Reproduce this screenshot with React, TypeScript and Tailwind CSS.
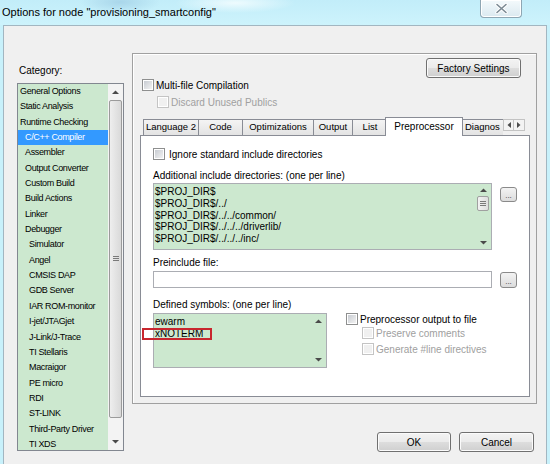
import type { ReactNode } from 'react';

const categories: [string, number][] = [
  ['General Options', 0],
  ['Static Analysis', 0],
  ['Runtime Checking', 0],
  ['C/C++ Compiler', 1],
  ['Assembler', 1],
  ['Output Converter', 1],
  ['Custom Build', 1],
  ['Build Actions', 1],
  ['Linker', 1],
  ['Debugger', 1],
  ['Simulator', 2],
  ['Angel', 2],
  ['CMSIS DAP', 2],
  ['GDB Server', 2],
  ['IAR ROM-monitor', 2],
  ['I-jet/JTAGjet', 2],
  ['J-Link/J-Trace', 2],
  ['TI Stellaris', 2],
  ['Macraigor', 2],
  ['PE micro', 2],
  ['RDI', 2],
  ['ST-LINK', 2],
  ['Third-Party Driver', 2],
  ['TI XDS', 2],
];

const indent = ['pl-[2px]', 'pl-[7px]', 'pl-[11px]'];

const tabs = [
  { label: 'Language 2', w: 'w-[55px]' },
  { label: 'Code', w: 'w-[44px]' },
  { label: 'Optimizations', w: 'w-[71px]' },
  { label: 'Output', w: 'w-[39px]' },
  { label: 'List', w: 'w-[35px]' },
];

function Arrow({ dir }: { dir: 'up' | 'down' | 'left' | 'right' }) {
  const d = {
    up: 'M0 4L3.5 0.5L7 4z',
    down: 'M0 0L3.5 3.5L7 0z',
    left: 'M4 0L0.5 3L4 6z',
    right: 'M0 0L3.5 3L0 6z',
  }[dir];
  const vertical = dir === 'up' || dir === 'down';
  return (
    <svg width={vertical ? 7 : 4} height={vertical ? 4 : 6} viewBox={vertical ? '0 0 7 4' : '0 0 4 6'}>
      <path d={d} fill="#4a4a4a" />
    </svg>
  );
}

function Grip() {
  return (
    <svg width="6" height="6" viewBox="0 0 6 6">
      <path d="M0 0.5H6M0 2.5H6M0 4.5H6" stroke="#7a7a7a" strokeWidth="1" />
    </svg>
  );
}

function Check({ disabled }: { disabled?: boolean }) {
  return (
    <span
      className={
        disabled
          ? 'block w-[12px] h-[12px] shrink-0 border border-[#c4c4c4] bg-white p-[1px]'
          : 'block w-[12px] h-[12px] shrink-0 border border-[#8e8f8f] bg-white p-[1px]'
      }
    >
      <span
        className={
          disabled
            ? 'block w-full h-full bg-[#f0f0f0]'
            : 'block w-full h-full bg-[linear-gradient(135deg,#c8ccd2,#f2f2f2)]'
        }
      />
    </span>
  );
}

function WinButton({ children, className }: { children: ReactNode; className: string }) {
  return (
    <div
      className={
        'flex items-center justify-center rounded-[3px] border border-[#707070] bg-[linear-gradient(to_bottom,#f3f3f3_0%,#ebebeb_48%,#dddddd_52%,#cfcfcf_100%)] shadow-[inset_0_0_0_1px_#fbfbfb] text-[10px] text-black ' +
        className
      }
    >
      {children}
    </div>
  );
}

function DotsButton({ className }: { className: string }) {
  return (
    <div
      className={
        'flex items-end justify-center pb-[2px] rounded-[3px] border border-[#8a8a8a] bg-[linear-gradient(to_bottom,#f3f3f3,#dcdcdc)] text-[8px] leading-[6px] text-[#333] ' +
        className
      }
    >
      ...
    </div>
  );
}

function CategoryList() {
  return (
    <div className="flex w-[107px] h-[368px] border border-[#828790] bg-[#cce8cf]">
      <div className="flex-1 flex flex-col">
        {categories.map(([name, level], i) => (
          <div
            key={name}
            className={
              (i === 3 ? 'bg-[#3399ff] text-white ' : 'text-black ') +
              indent[level] +
              ' h-[15.35px] leading-[15.35px] text-[9px] tracking-[-0.35px] whitespace-nowrap'
            }
          >
            {name}
          </div>
        ))}
      </div>
      <div className="w-[15px] flex flex-col items-center bg-[#f3f3f3]">
        <div className="h-[16px] flex items-center justify-center">
          <Arrow dir="up" />
        </div>
        <div className="w-[13px] h-[318px] rounded-[2px] border border-[#9b9b9b] bg-[linear-gradient(to_right,#eeeeee,#d9d9d9)] flex items-center justify-center">
          <Grip />
        </div>
        <div className="flex-1" />
        <div className="h-[17px] flex items-center justify-center">
          <Arrow dir="down" />
        </div>
      </div>
    </div>
  );
}

function Tabs() {
  return (
    <div className="relative z-10 flex h-[19px] pl-[3px]">
      <div className="flex items-end w-[360px] overflow-hidden">
        {tabs.map((t) => (
          <div
            key={t.label}
            className={
              t.w +
              ' h-[17px] shrink-0 border border-r-0 border-[#898c95] bg-[linear-gradient(to_bottom,#f4f4f4,#e3e3e3)] flex items-center justify-center text-[9.5px] text-black whitespace-nowrap'
            }
          >
            {t.label}
          </div>
        ))}
        <div className="relative z-10 w-[78px] h-[19px] -mx-[2px] shrink-0 border border-b-0 border-[#898c95] bg-white flex items-center justify-center pb-[1px] text-[10px] text-black">
          Preprocessor
        </div>
        <div className="w-[60px] h-[17px] shrink-0 border border-r-0 border-[#898c95] bg-[linear-gradient(to_bottom,#f4f4f4,#e3e3e3)] flex items-center pl-[3px] text-[9.5px] text-black whitespace-nowrap">
          Diagnos
        </div>
      </div>
      <div className="flex mt-[2px] self-start">
        <div className="w-[11px] h-[12px] border border-[#c3c3c3] bg-[#f3f3f3] flex items-center justify-center">
          <Arrow dir="left" />
        </div>
        <div className="w-[11px] h-[12px] border border-l-0 border-[#c3c3c3] bg-[#f3f3f3] flex items-center justify-center">
          <Arrow dir="right" />
        </div>
      </div>
    </div>
  );
}

function PreprocessorPage() {
  const dirs = [
    '$PROJ_DIR$',
    '$PROJ_DIR$/../',
    '$PROJ_DIR$/../../common/',
    '$PROJ_DIR$/../../../driverlib/',
    '$PROJ_DIR$/../../../inc/',
  ];
  return (
    <div className="relative -mt-[1px] h-[262px] border border-[#898c95] bg-white pl-[12px] text-[10px] text-black">
      <div className="mt-[12px] h-[12px] flex items-center gap-[4px]">
        <Check />
        <span>Ignore standard include directories</span>
      </div>
      <div className="mt-[10px] h-[12px] leading-[12px]">Additional include directories: (one per line)</div>
      <div className="mt-[1px] flex items-start">
        <div className="flex w-[339px] h-[67px] border border-[#abadb3] bg-[#cce8cf]">
          <div className="flex-1 pl-[1px] pt-[2px]">
            {dirs.map((d) => (
              <div key={d} className="leading-[11.8px] whitespace-nowrap">
                {d}
              </div>
            ))}
          </div>
          <div className="w-[14px] mr-[1px] flex flex-col items-center">
            <div className="h-[12px] flex items-center justify-center">
              <Arrow dir="up" />
            </div>
            <div className="w-[12px] h-[15px] rounded-[2px] border border-[#a0a0a0] bg-[linear-gradient(to_right,#f2f2f2,#dedede)] flex items-center justify-center">
              <Grip />
            </div>
            <div className="flex-1" />
            <div className="h-[12px] flex items-center justify-center">
              <Arrow dir="down" />
            </div>
          </div>
        </div>
        <DotsButton className="ml-[8px] mt-[4px] w-[17px] h-[15px]" />
      </div>
      <div className="mt-[7px] h-[12px] leading-[12px]">Preinclude file:</div>
      <div className="mt-[2px] flex items-start">
        <div className="w-[339px] h-[17px] border border-[#abadb3] bg-white" />
        <DotsButton className="ml-[8px] mt-[1px] w-[17px] h-[16px]" />
      </div>
      <div className="mt-[11px] h-[12px] leading-[12px]">Defined symbols: (one per line)</div>
      <div className="mt-[2px] flex items-start">
        <div className="flex w-[174px] h-[55px] border border-[#abadb3] bg-[#cce8cf]">
          <div className="flex-1 pl-[1px] pt-[2px]">
            <div className="leading-[11.8px]">ewarm</div>
            <div className="leading-[11.8px]">xNOTERM</div>
          </div>
          <div className="w-[14px] mr-[1px] flex flex-col items-center justify-between py-[5px]">
            <Arrow dir="up" />
            <Arrow dir="down" />
          </div>
        </div>
        <div className="ml-[19px] flex flex-col">
          <div className="h-[12px] flex items-center gap-[2px]">
            <Check />
            <span>Preprocessor output to file</span>
          </div>
          <div className="mt-[2px] h-[12px] pl-[16px] flex items-center gap-[2px] text-[#a0a0a0]">
            <Check disabled />
            <span>Preserve comments</span>
          </div>
          <div className="mt-[4px] h-[12px] pl-[16px] flex items-center gap-[2px] text-[#a0a0a0]">
            <Check disabled />
            <span>Generate #line directives</span>
          </div>
        </div>
      </div>
      {/* highlight drawn over the symbol list */}
      <div className="absolute left-[1px] top-[192px] w-[70px] h-[12px] border-2 border-[#c8262e]" />
    </div>
  );
}

export default function App() {
  return (
    <div className="w-[550px] h-[464px] overflow-hidden flex flex-col bg-[#c8f1fb] font-['Liberation_Sans',Arial,sans-serif]">
      <div className="h-[25px] shrink-0 flex items-start bg-[radial-gradient(ellipse_40px_12px_at_120px_2px,#a9d6ea,transparent),radial-gradient(ellipse_60px_10px_at_235px_3px,#eefbfe,transparent),linear-gradient(to_bottom,#c2edf9,#cdf3fc)]">
        <div className="pl-[2px] pt-[5px] text-[11px] leading-[14px] text-black whitespace-nowrap">
          Options for node "provisioning_smartconfig"
        </div>
        <div className="flex-1" />
        <div className="mr-[28px] w-[42px] h-[18px] rounded-b-[4px] border border-t-0 border-[#8ea6b3] bg-[linear-gradient(to_bottom,#f4fafc,#dbe9f0)] shadow-[inset_0_0_0_1px_#ffffff] flex items-center justify-center">
          <svg width="13" height="11" viewBox="0 0 13 11">
            <path d="M2 1.5L11 9.5M11 1.5L2 9.5" stroke="#ffffff" strokeWidth="3.4" strokeLinecap="round" />
            <path d="M2 1.5L11 9.5M11 1.5L2 9.5" stroke="#7b8a94" strokeWidth="1.6" strokeLinecap="round" />
          </svg>
        </div>
      </div>
      <div className="flex-1 px-[3px]">
        <div className="h-full flex border border-b-0 border-[#a2b6c1] bg-[#f0f0f0] pl-[13px] pt-[27px]">
          <div className="mt-[11px] flex flex-col">
            <div className="h-[13px] leading-[13px] pl-[2px] text-[10px] text-black">Category:</div>
            <div className="mt-[6px]">
              <CategoryList />
            </div>
          </div>
          <div className="ml-[8px] w-[405px] flex flex-col">
            <div className="h-[351px] border border-[#a0a0a0] shadow-[inset_1px_1px_0_#ffffff] flex flex-col">
              <div className="flex justify-end pr-[15px] pt-[4px]">
                <WinButton className="w-[95px] h-[20px]">Factory Settings</WinButton>
              </div>
              <div className="mt-[1px] h-[12px] pl-[9px] flex items-center gap-[2px] text-[10px] text-black">
                <Check />
                <span>Multi-file Compilation</span>
              </div>
              <div className="mt-[5px] h-[12px] pl-[24px] flex items-center gap-[2px] text-[10px] text-[#a0a0a0]">
                <Check disabled />
                <span>Discard Unused Publics</span>
              </div>
              <div className="mt-[9px] ml-[7px] w-[390px]">
                <Tabs />
                <PreprocessorPage />
              </div>
            </div>
            <div className="mt-[28px] flex justify-end gap-[8px] pr-[3px]">
              <WinButton className="w-[74px] h-[20px]">OK</WinButton>
              <WinButton className="w-[75px] h-[20px]">Cancel</WinButton>
            </div>
          </div>
        </div>
      </div>
    </div>
  );
}
